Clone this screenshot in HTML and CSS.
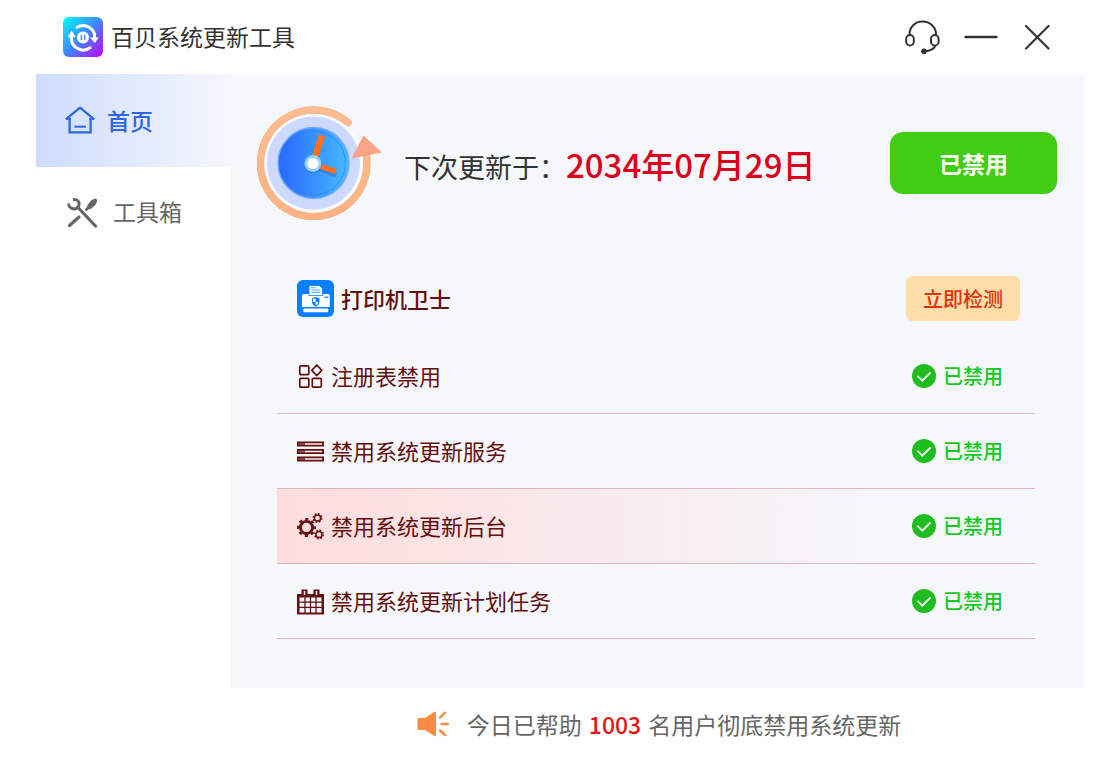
FILE: index.html
```html
<!DOCTYPE html>
<html lang="zh-CN">
<head>
<meta charset="utf-8">
<meta name="viewport" content="width=device-width, initial-scale=1">
<title>百贝系统更新工具</title>
<link rel="stylesheet" href="styles.css">
</head>
<body>
<div class="window">
  <header class="titlebar">
    <svg class="logo" viewBox="0 0 40 40" aria-hidden="true">
      <defs>
        <linearGradient id="logo-bg" x1="0" y1="0" x2="1" y2="1">
          <stop offset="0" stop-color="#00fff0"/>
          <stop offset=".5" stop-color="#3f86ff"/>
          <stop offset="1" stop-color="#c400ff"/>
        </linearGradient>
      </defs>
      <rect width="40" height="40" rx="6" fill="url(#logo-bg)"/>
      <g fill="none" stroke="#fff" stroke-width="3" stroke-linecap="round">
        <path d="M14 10.200A11.800 11.800 0 0 1 31.800 21"/>
        <path d="M27 30.800A11.800 11.800 0 0 1 8.600 19"/>
      </g>
      <path d="M27 20.500h8.800L31.800 26zM4.600 20.300l4.100-6.600 4.300 6.600z" fill="#fff"/>
      <circle cx="20" cy="20.500" r="6" fill="#fff"/>
      <path d="M18.400 17.800v5.400M21.700 17.800v5.400" stroke="#4a8cff" stroke-width="1.500"/>
    </svg>
    <h1 class="app-name">百贝系统更新工具</h1>
    <div class="controls">
      <button class="control" type="button" aria-label="客服">
        <svg width="35" height="35" viewBox="0 0 35 35" fill="none" stroke="#333" stroke-width="2">
          <path d="M4.500 15.500V14.500C4.500 7 10 1.500 17.500 1.500S31 7 31 14.500v1"/>
          <rect x="1.200" y="15" width="7.600" height="10.500" rx="3.800"/>
          <rect x="26" y="15" width="7.600" height="10.500" rx="3.800"/>
          <path d="M30.500 25.500q-2.500 5.500-11 5.700"/>
          <circle cx="19" cy="31.200" r="2.800" fill="#333" stroke="none"/>
        </svg>
      </button>
      <button class="control" type="button" aria-label="最小化">
        <svg width="34" height="27" viewBox="0 0 34 27"><path d="M1.500 13h31" stroke="#333" stroke-width="2.400" stroke-linecap="round"/></svg>
      </button>
      <button class="control" type="button" aria-label="关闭">
        <svg width="26" height="27" viewBox="0 0 26 27"><path d="M2 2l22.500 22.500M24.500 2L2 24.500" stroke="#333" stroke-width="2.200" stroke-linecap="round"/></svg>
      </button>
    </div>
  </header>

  <div class="body">
    <nav class="sidebar">
      <a class="nav-item nav-item-active" href="#home">
        <svg width="30" height="28" viewBox="0 0 30 28" fill="none" stroke="#2e66e8" stroke-width="2.300">
          <path d="M4.600 12V26.400h21V12"/>
          <path d="M.8 13.300L15 1.600 29.200 13.300" stroke-linejoin="round"/>
          <path d="M1 13h5M24.200 13h5" stroke-width="1.500"/>
          <path d="M9.500 20.700h11.500" stroke-width="2"/>
        </svg>
        <span>首页</span>
      </a>
      <a class="nav-item nav-item-tools" href="#tools">
        <svg width="31" height="30" viewBox="0 0 31 30" fill="none" stroke="#666">
          <path d="M6 1.800c4-.9 7.500 2.200 5.500 6.400-2.400 4.400-9.600 3.200-9.900-2.700" stroke-width="3"/>
          <path d="M11 9.500L28.500 28" stroke-width="3.200" stroke-linecap="round"/>
          <path d="M2.500 27.500L12 19" stroke-width="3.200" stroke-linecap="round"/>
          <path d="M19.500 11.500l3-3" stroke-width="3" stroke-linecap="round"/>
          <path d="M20.500 7.500l4-5 4-1.700 1.500 1.400-1.700 4.500-5 4.300z" fill="#666" stroke="#666" stroke-width=".8"/>
        </svg>
        <span>工具箱</span>
      </a>
    </nav>

    <main class="main">
      <section class="hero">
        <svg class="clock" viewBox="0 0 125 114" aria-hidden="true">
          <defs>
            <linearGradient id="face" x1="0" y1="0" x2="1" y2="0">
              <stop offset="0" stop-color="#2868ff"/>
              <stop offset="1" stop-color="#46baff"/>
            </linearGradient>
            <linearGradient id="ring" x1="0" y1="0" x2="0" y2="1">
              <stop offset="0" stop-color="#ffbd90"/>
              <stop offset="1" stop-color="#ffb283"/>
            </linearGradient>
          </defs>
          <circle cx="56.500" cy="57" r="50" fill="#fafbff"/>
          <circle cx="56.500" cy="57" r="46.500" fill="#cdd9ff"/>
          <circle cx="56.500" cy="57" r="35.500" fill="url(#face)" stroke="#6aaaff" stroke-width="1.400"/>
          <circle cx="56.500" cy="57" r="32" fill="none" stroke="#2879f5" stroke-width="1" opacity=".6"/>
          <path d="M91 16.500A53.300 53.300 0 1 0 109.500 50" fill="none" stroke="#edb080" stroke-width="7.400" stroke-linecap="round"/>
          <path d="M91 16.500A53.300 53.300 0 1 0 109.500 50" fill="none" stroke="url(#ring)" stroke-width="6.400" stroke-linecap="round"/>
          <path d="M106.500 29.500L125 46.500 94.500 52.500z" fill="#f99b78" fill-opacity=".9"/>
          <path d="M56 60l23 9" stroke="#1557c8" stroke-width="5" opacity=".35"/>
          <path d="M56 57l9-27.500" stroke="#ff6f1e" stroke-width="6.500"/>
          <path d="M56 58l23 7.500" stroke="#ff6f1e" stroke-width="5.500"/>
          <circle cx="56.500" cy="59" r="8.500" fill="#1557c8" opacity=".4"/>
          <circle cx="56" cy="57.500" r="8.500" fill="#90d0ff"/>
          <circle cx="56" cy="57.500" r="5.600" fill="#fff"/>
        </svg>
        <p class="next-update">下次更新于：<strong class="date">2034年07月29日</strong></p>
        <button class="btn-primary" type="button">已禁用</button>
      </section>

      <section class="printer">
        <svg class="printer-icon" viewBox="0 0 37 37" aria-hidden="true">
          <rect width="37" height="37" rx="6" fill="#087fff"/>
          <path d="M5 15.500q0-1.500 1.500-1.500h24.500q1.800 0 1.800 1.800V27H5z" fill="#fff"/>
          <path d="M12 5.500h10.500l3 3V15.500H12z" fill="#fff" stroke="#087fff" stroke-width=".8"/>
          <path d="M13.500 7.800h6M14.500 10h9M14.500 12.400h9" stroke="#6aaeff" stroke-width="1.100"/>
          <path d="M27.500 17.200h4" stroke="#087fff" stroke-width="1.200"/>
          <path d="M15 18.200l3.700-1.200 3.800 1.200v3.500q0 3-3.800 5-3.700-2-3.700-5z" fill="#087fff"/>
          <path d="M18.700 18.200v3.800h-2.800v-3zM18.700 22h2.900q-.3 2-2.900 3.400z" fill="#fff"/>
          <rect x="6.300" y="28" width="25" height="4.300" rx="1" fill="#fff"/>
          <path d="M6 28h26" stroke="#087fff" stroke-width="1"/>
        </svg>
        <h2 class="printer-name">打印机卫士</h2>
        <button class="btn-check" type="button">立即检测</button>
      </section>

      <ul class="list">
        <li class="row">
          <svg class="row-icon" viewBox="0 0 27 27" fill="none" stroke="#641010" stroke-width="1.700">
            <rect x="2.800" y="2.800" width="9" height="8.800" rx="1"/>
            <rect x="2.800" y="15.300" width="9" height="8.800" rx="1"/>
            <rect x="15.300" y="15.300" width="9" height="8.800" rx="1"/>
            <path d="M19.800 2l5 5.300-5 5.300-5-5.300z" stroke-linejoin="round"/>
          </svg>
          <span class="row-name">注册表禁用</span>
          <span class="status"><svg class="tick" viewBox="0 0 24 24"><circle cx="12" cy="12" r="12" fill="#20bd20"/><path d="M6 12.300l4.300 4.400L18 9" fill="none" stroke="#f1fff1" stroke-width="1.800" stroke-linecap="round"/></svg>已禁用</span>
        </li>
        <li class="row">
          <svg class="row-icon" viewBox="0 0 27 27" fill="none" stroke="#641010" stroke-width="1.800">
            <path d="M.9 4.400h25.200v3.200H.9zM.9 11.900h25.200v3.200H.9zM.9 19.400h25.200v3.200H.9z"/>
            <path d="M2 6h6M2 13.500h6M2 21h6" stroke-width="2" opacity=".7"/>
          </svg>
          <span class="row-name">禁用系统更新服务</span>
          <span class="status"><svg class="tick" viewBox="0 0 24 24"><circle cx="12" cy="12" r="12" fill="#20bd20"/><path d="M6 12.300l4.300 4.400L18 9" fill="none" stroke="#f1fff1" stroke-width="1.800" stroke-linecap="round"/></svg>已禁用</span>
        </li>
        <li class="row row-active">
          <svg class="row-icon" viewBox="0 0 27 27" fill="none" stroke="#641010">
            <circle cx="9.500" cy="14.500" r="6.100" stroke-width="2.800"/>
            <circle cx="9.500" cy="14.500" r="8.300" stroke-width="2.200" stroke-dasharray="3.200 3.320" stroke-dashoffset="1.600"/>
            <circle cx="20.500" cy="5" r="3.100" stroke-width="1.500"/>
            <circle cx="20.500" cy="5" r="4.200" stroke-width="1.500" stroke-dasharray="1.700 1.600"/>
            <circle cx="22" cy="21.500" r="3.100" stroke-width="1.500"/>
            <circle cx="22" cy="21.500" r="4.200" stroke-width="1.500" stroke-dasharray="1.700 1.600"/>
          </svg>
          <span class="row-name">禁用系统更新后台</span>
          <span class="status"><svg class="tick" viewBox="0 0 24 24"><circle cx="12" cy="12" r="12" fill="#20bd20"/><path d="M6 12.300l4.300 4.400L18 9" fill="none" stroke="#f1fff1" stroke-width="1.800" stroke-linecap="round"/></svg>已禁用</span>
        </li>
        <li class="row">
          <svg class="row-icon" viewBox="0 0 27 27" fill="none" stroke="#641010">
            <path d="M0 6h27v20.500H0z" fill="#641010" stroke="none"/>
            <path d="M4.500 1.500h6v6h-6zM16.500 1.500h6v6h-6z" fill="#641010" stroke="none"/>
            <path d="M7.500 3v4M19.500 3v4" stroke="#f3f3f8" stroke-width="1.500"/>
            <path d="M2.500 9.500h22V24.500h-22z" fill="#f5f6fb" stroke="none"/>
            <path d="M2 14.200h23M2 19.300h23M8 9v16M13.500 9v16M19 9v16" stroke-width="1.300"/>
          </svg>
          <span class="row-name">禁用系统更新计划任务</span>
          <span class="status"><svg class="tick" viewBox="0 0 24 24"><circle cx="12" cy="12" r="12" fill="#20bd20"/><path d="M6 12.300l4.300 4.400L18 9" fill="none" stroke="#f1fff1" stroke-width="1.800" stroke-linecap="round"/></svg>已禁用</span>
        </li>
      </ul>
    </main>
  </div>

  <footer class="footer">
    <svg class="horn" viewBox="0 0 32 26" aria-hidden="true">
      <path d="M1.500 7H8L17.500 .8q1.500-.6 1.500 1V24q0 1.600-1.500 1L8 19H1.500Q.5 19 .5 18V8q0-1 1-1z" fill="#f98c40"/>
      <path d="M23 6.500l5-4.800M24.500 13h6.500M23 19.500l5 4.500" fill="none" stroke="#f98c40" stroke-width="2.400" stroke-linecap="round"/>
    </svg>
    <p class="stats"><span>今日已帮助</span><strong class="count">1003</strong><span>名用户彻底禁用系统更新</span></p>
  </footer>
</div>
</body>
</html>
```
FILE: styles.css
```css
* {
  box-sizing: border-box;
}

body {
  margin: 0;
  background: #fff;
  color: #333;
  font-family: "Noto Sans CJK SC", sans-serif;
  font-size: 23px;
  line-height: 32px;
}

h1, h2, p, ul {
  margin: 0;
  padding: 0;
  font-weight: 400;
}

button {
  border: 0;
  font-family: inherit;
  cursor: pointer;
}

svg {
  display: block;
  flex: none;
}

.window {
  display: flex;
  flex-direction: column;
  min-height: 100vh;
  padding: 0 36px;
}

.titlebar {
  display: flex;
  align-items: center;
  gap: 8px;
  min-height: 74px;
  padding: 0 34px 0 27px;
}

.logo {
  width: 40px;
  height: 40px;
}

.app-name {
  padding-bottom: 2px;
  font-size: 23px;
}

.controls {
  display: flex;
  align-items: center;
  gap: 24px;
  margin-left: auto;
}

.control {
  padding: 0;
  background: none;
}

.control:last-child {
  margin-left: 2px;
}

.body {
  display: grid;
  grid-template-columns: 194px 1fr;
  flex: 1;
}

.nav-item {
  display: flex;
  align-items: center;
  gap: 12px;
  min-height: 93px;
  padding: 0 0 2px 29px;
  color: #666;
  text-decoration: none;
}

.nav-item-active {
  background: linear-gradient(90deg, #cfdcff, #f5f7fb);
  color: #2e66e8;
  font-weight: 500;
}

.nav-item-tools {
  gap: 15px;
  padding-left: 31px;
}

.nav-item-tools span {
  padding-bottom: 4px;
}

.main {
  padding: 32px 27px 49px;
  background: #f5f7fb;
}

.hero {
  display: flex;
  align-items: center;
  gap: 22px;
}

.clock {
  width: 125px;
  height: 114px;
}

.next-update {
  padding-top: 4px;
  font-size: 27px;
  line-height: 48px;
}

.date {
  color: #dc001c;
  font-size: 33px;
  font-weight: 500;
}

.btn-primary {
  min-width: 167px;
  margin-left: auto;
  padding: 15px 24px;
  border-radius: 13px;
  background: #43cc14;
  color: #fff;
  font-size: 23px;
  font-weight: 700;
  line-height: 32px;
}

.printer {
  display: flex;
  align-items: center;
  gap: 7px;
  margin-top: 56px;
  padding: 0 37px 0 40px;
}

.printer-icon {
  width: 37px;
  height: 37px;
}

.printer-name {
  padding-bottom: 2px;
  color: #641010;
  font-size: 22px;
  font-weight: 500;
}

.btn-check {
  margin-left: auto;
  padding: 8px 17px 7px;
  border-radius: 6px;
  background: #ffdeab;
  color: #e23208;
  font-size: 20px;
  font-weight: 500;
  line-height: 30px;
}

.list {
  margin: 18px 22px 0 20px;
  list-style: none;
}

.row {
  display: flex;
  align-items: center;
  gap: 7px;
  min-height: 75px;
  padding: 0 32px 0 20px;
  border-bottom: 1px solid #deb8be;
}

.row-active {
  background: linear-gradient(90deg, #ffdcdc, #f5f7fb 80%);
}

.row-icon {
  width: 27px;
  height: 27px;
}

.row-name {
  padding-bottom: 2px;
  color: #641010;
  font-size: 22px;
}

.status {
  display: flex;
  align-items: center;
  gap: 7px;
  margin-left: auto;
  color: #12c922;
  font-size: 20px;
  font-weight: 500;
  line-height: 34px;
}

.tick {
  width: 24px;
  height: 24px;
}

.footer {
  display: flex;
  align-items: center;
  justify-content: center;
  gap: 18px;
  min-height: 72px;
  padding-left: 198px;
  color: #666;
}

.horn {
  width: 32px;
  height: 26px;
}

.stats {
  display: flex;
  gap: 7px;
}

.count {
  color: #ea1212;
  font-weight: 500;
}
```
